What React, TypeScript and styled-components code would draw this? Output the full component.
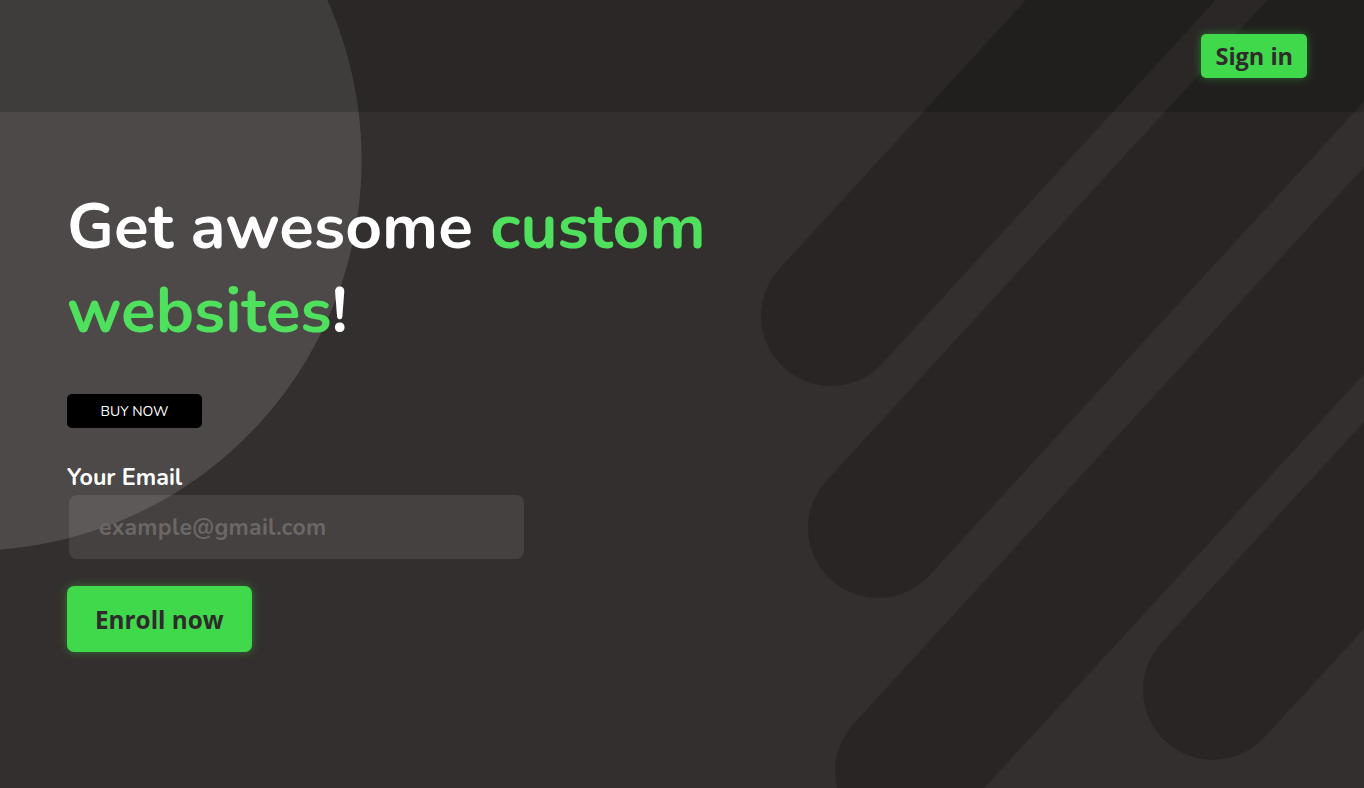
import React from "react";
import styled, { createGlobalStyle } from "styled-components";

const GlobalStyle = createGlobalStyle`
  html, body { margin: 0; padding: 0; background: #332f2e; }
  * { box-sizing: border-box; }
`;

const Page = styled.div`
  position: relative;
  width: 100%;
  min-height: 100vh;
  overflow: hidden;
  background:
    radial-gradient(circle at -29px 160px, #4c4948 390px, rgba(76, 73, 72, 0) 391px),
    #332f2e;
`;

const Stripes = styled.svg`
  position: absolute;
  inset: 0;
  width: 100%;
  height: 100%;
  z-index: 0;
  pointer-events: none;
`;

const Header = styled.header`
  position: relative;
  z-index: 1;
  height: 112px;
  display: flex;
  align-items: center;
  justify-content: flex-end;
  padding-right: 57px;
  background: rgba(0, 0, 0, 0.16);
`;

const GreenButton = styled.button<{ $size: "sm" | "lg" }>`
  border: none;
  cursor: pointer;
  background: #3fd94b;
  color: #2f2b2b;
  font-family: "Open Sans", "Noto Sans", sans-serif;
  font-weight: 700;
  font-size: ${(p) => (p.$size === "sm" ? "23.5px" : "24.3px")};
  height: ${(p) => (p.$size === "sm" ? "44px" : "66px")};
  padding: ${(p) => (p.$size === "sm" ? "2px 14px 0" : "3px 28px 0")};
  border-radius: ${(p) => (p.$size === "sm" ? "5px" : "7px")};
  box-shadow: 0 0 10px rgba(63, 217, 75, 0.4);
  line-height: 1;
`;

const Hero = styled.main`
  position: relative;
  z-index: 1;
  padding: 73px 0 0 67px;
  display: flex;
  flex-direction: column;
  align-items: flex-start;
`;

const Headline = styled.h1`
  margin: 0;
  max-width: 700px;
  font-family: "Nunito", "Lato", sans-serif;
  font-weight: 700;
  font-size: 64px;
  line-height: 84px;
  color: #ffffff;
`;

const Accent = styled.span`
  color: #4fe05d;
`;

const BuyButton = styled.button`
  margin-top: 41px;
  width: 135px;
  height: 34px;
  border: none;
  border-radius: 5px;
  background: #000000;
  color: #ffffff;
  font-family: "Nunito", "Lato", sans-serif;
  font-weight: 400;
  font-size: 14px;
  cursor: pointer;
`;

const Label = styled.label`
  margin-top: 35px;
  font-family: "Nunito", "Lato", sans-serif;
  font-weight: 700;
  font-size: 23.3px;
  line-height: 29px;
  color: #ffffff;
`;

const EmailInput = styled.input`
  margin: 3px 0 0 2px;
  width: 455px;
  height: 64px;
  border: none;
  outline: none;
  border-radius: 8px;
  padding: 0 30px;
  background: rgba(255, 255, 255, 0.09);
  color: #ffffff;
  font-family: "Nunito", "Lato", sans-serif;
  font-weight: 700;
  font-size: 23px;
  letter-spacing: 0.3px;
  &::placeholder {
    color: #6b6766;
  }
`;

const EnrollButton = styled(GreenButton)`
  margin-top: 27px;
`;

const stripeData = [
  { x: 831, y: 316 },
  { x: 878, y: 528 },
  { x: 905, y: 771 },
  { x: 1213, y: 690 },
];

export default function App() {
  return (
    <>
      <GlobalStyle />
      <Page>
        <Stripes aria-hidden="true">
          {stripeData.map((s, i) => (
            <line
              key={i}
              x1={s.x}
              y1={s.y}
              x2={s.x + 0.676 * 1400}
              y2={s.y - 0.737 * 1400}
              stroke="rgba(0,0,0,0.2)"
              strokeWidth={140}
              strokeLinecap="round"
            />
          ))}
        </Stripes>
        <Header>
          <GreenButton $size="sm">Sign in</GreenButton>
        </Header>
        <Hero>
          <Headline>
            Get awesome <Accent>custom websites</Accent>!
          </Headline>
          <BuyButton>BUY NOW</BuyButton>
          <Label htmlFor="email">Your Email</Label>
          <EmailInput id="email" type="email" placeholder="example@gmail.com" />
          <EnrollButton $size="lg">Enroll now</EnrollButton>
        </Hero>
      </Page>
    </>
  );
}
